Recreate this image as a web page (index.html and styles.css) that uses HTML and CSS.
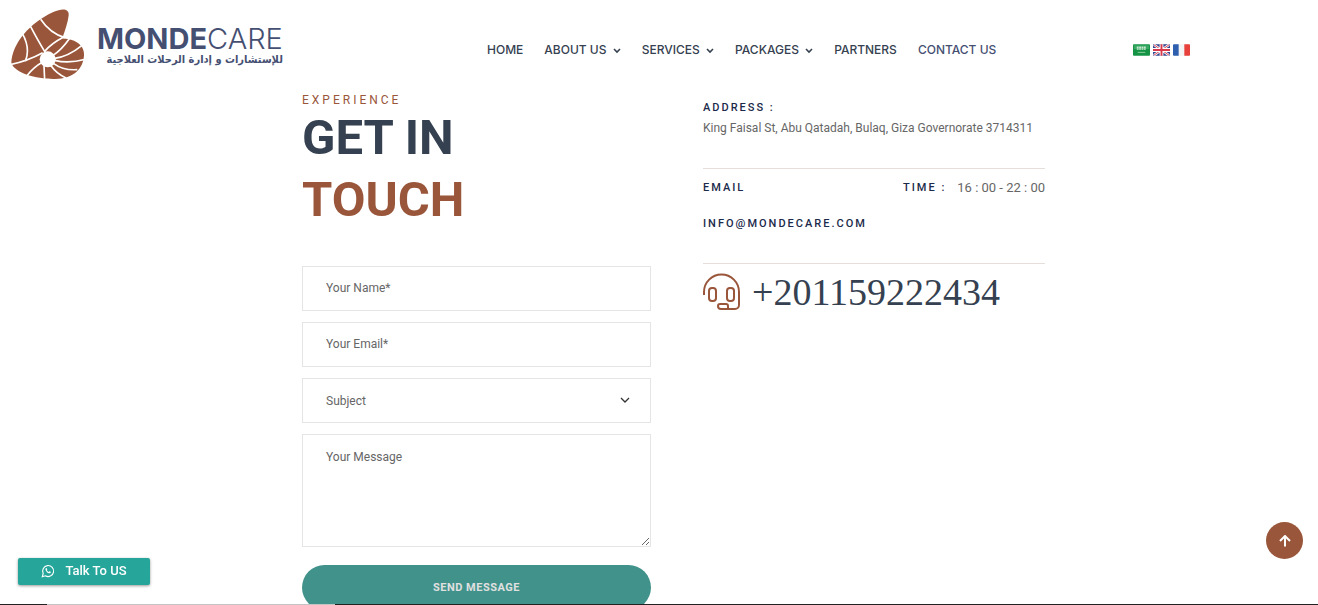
FILE: index.html
```html
<!DOCTYPE html>
<html lang="en">
<head>
    <meta charset="UTF-8">
    <meta name="viewport" content="width=device-width, initial-scale=1.0">
    <title>Mondecare - Contact Us</title>
    <link rel="stylesheet" href="styles.css">
</head>
<body>
    <header class="header">
        <a class="logo" href="#">
            <svg class="logo-mark" viewBox="30 24 225 216" aria-hidden="true">
                <path fill="#9a563a" d="M34 190C36 130 90 68 160 36C188 23 208 26 206 46C204 66 196 90 187 114C190 117 200 116 213 119C240 127 253 144 252 166C250 205 222 237 165 237C110 238 46 220 34 190Z"/>
                <g fill="none" stroke="#fff" stroke-width="5">
                    <path d="M67 100Q92 145 76 184M92 80Q110 115 136 158M122 58Q150 100 194 113M190 112Q155 130 134 154M30 194Q85 182 128 158M82 226Q100 202 128 186M134 240L132 198M198 234Q170 222 152 196M232 209Q190 212 160 190M256 178Q205 192 164 181M245 137Q205 170 164 175M209 115Q185 150 158 167"/>
                </g>
                <circle cx="143" cy="178" r="24" fill="#fff"/>
            </svg>
            <span class="logo-text">
                <span class="logo-name"><b>MONDE</b>CARE</span>
                <span class="logo-tagline" lang="ar" dir="rtl">للإستشارات و إدارة الرحلات العلاجية</span>
            </span>
        </a>

        <nav class="nav">
            <a href="#">HOME</a>
            <a href="#">ABOUT US <svg class="caret" viewBox="0 0 8 6"><path d="M1 1l3 3 3-3"/></svg></a>
            <a href="#">SERVICES <svg class="caret" viewBox="0 0 8 6"><path d="M1 1l3 3 3-3"/></svg></a>
            <a href="#">PACKAGES <svg class="caret" viewBox="0 0 8 6"><path d="M1 1l3 3 3-3"/></svg></a>
            <a href="#">PARTNERS</a>
            <a class="active" href="#">CONTACT US</a>
        </nav>

        <div class="flags">
            <a href="#" aria-label="Arabic">
                <svg viewBox="0 0 18 14">
                    <rect y="1" width="18" height="12" rx="1" fill="#169446"/>
                    <rect x="1" y="2" width="16" height="4" fill="#38a862"/>
                    <path d="M4 4h10M4 6h10" stroke="#c6e8cf" stroke-width="1.5" stroke-dasharray="2 .5"/>
                    <path d="M5 9.5h8" stroke="#8fd0a2"/>
                </svg>
            </a>
            <a href="#" aria-label="English">
                <svg viewBox="0 0 18 14">
                    <rect y="1" width="18" height="12" rx="1" fill="#33468f"/>
                    <path d="M1 1.500l16 11M17 1.500L1 12.500" stroke="#fff" stroke-width="2.500"/>
                    <path d="M1 1.500l16 11M17 1.500L1 12.500" stroke="#d8384a"/>
                    <path d="M9 1v12M0 7h18" stroke="#fff" stroke-width="4"/>
                    <path d="M9 1v12M0 7h18" stroke="#d8384a" stroke-width="2"/>
                </svg>
            </a>
            <a href="#" aria-label="French">
                <svg viewBox="0 0 18 14">
                    <rect y="1" width="18" height="12" rx="1" fill="#f4f4f4"/>
                    <path d="M1 1h5v12H1a1 1 0 0 1-1-1V2a1 1 0 0 1 1-1z" fill="#2d5fae"/>
                    <path d="M12 1h5a1 1 0 0 1 1 1v10a1 1 0 0 1-1 1h-5z" fill="#e8403a"/>
                </svg>
            </a>
        </div>
    </header>

    <main class="contact">
        <section class="form-side">
            <p class="eyebrow">EXPERIENCE</p>
            <h1>GET IN<br><span>TOUCH</span></h1>

            <form class="contact-form">
                <input type="text" id="name" placeholder="Your Name*" aria-label="Your Name">
                <input type="email" id="email" placeholder="Your Email*" aria-label="Your Email">
                <div class="select-wrap">
                    <select id="subject" aria-label="Subject">
                        <option>Subject</option>
                    </select>
                    <svg viewBox="0 0 10 6"><path d="M1 1l4 4 4-4"/></svg>
                </div>
                <textarea id="message" placeholder="Your Message" aria-label="Your Message"></textarea>
                <button class="send" type="submit">SEND MESSAGE</button>
            </form>
        </section>

        <section class="info-side">
            <div class="info-block">
                <h2>ADDRESS :</h2>
                <p>King Faisal St, Abu Qatadah, Bulaq, Giza Governorate 3714311</p>
            </div>
            <div class="info-block mail-block">
                <div class="info-row">
                    <h2>EMAIL</h2>
                    <div class="time">
                        <h2>TIME :</h2>
                        <p>16 : 00 - 22 : 00</p>
                    </div>
                </div>
                <a class="mail" href="mailto:info@mondecare.com">INFO@MONDECARE.COM</a>
            </div>
            <a class="phone" href="tel:+201159222434">
                <svg viewBox="0 0 37 37" aria-hidden="true">
                    <path d="M1 21v-3a17 17 0 0 1 35 0v13a4 4 0 0 1-4 4h-6"/>
                    <rect x="6" y="14" width="7" height="13" rx="3"/>
                    <rect x="24" y="14" width="7" height="13" rx="3"/>
                    <path d="M26 35h-8a3 3 0 0 1-3-3 2 2 0 0 1 2-2h6a2 2 0 0 1 2 2v3"/>
                </svg>
                <span>+201159222434</span>
            </a>
        </section>
    </main>

    <!-- Floating buttons -->
    <button class="talk" type="button">
        <svg viewBox="0 0 16 16" aria-hidden="true">
            <path d="M1.500 14.500l1-3.700A6.300 6.300 0 1 1 5 13.500z" fill="none" stroke="currentColor" stroke-width="1.300"/>
            <path d="M5.300 5c.5-.8 1.200-.6 1.400 0l.5 1.200-.6.800c.5 1 1.300 1.600 2.200 2l.8-.8 1.500.700c.4.3 0 1.300-.7 1.600-2 .8-6-2.500-5.100-5.500z" fill="currentColor"/>
        </svg>
        Talk To US
    </button>
    <a class="to-top" href="#" aria-label="Back to top">
        <svg viewBox="0 0 12 12"><path d="M6 11.500V1.500M1 6l5-5 5 5"/></svg>
    </a>
    <div class="bottom-line"></div>
</body>
</html>
```

FILE: styles.css
```css
/* General Styles */
* {
    margin: 0;
    padding: 0;
    box-sizing: border-box;
}

body {
    font-family: Roboto, "Liberation Sans", sans-serif;
    font-size: 12px;
    line-height: 24px;
    color: #666;
    background: #fff;
}

a {
    color: inherit;
    text-decoration: none;
}

/* Header */
.header {
    display: grid;
    grid-template-columns: 477fr 646fr 185fr;
    align-items: center;
    padding: 8px 0 8px 10px;
}

.logo {
    display: flex;
    align-items: center;
    gap: 12px;
    color: #454f72;
}

.logo-mark {
    width: 75px;
    height: 72px;
}

.logo-text {
    display: flex;
    flex-direction: column;
    padding-top: 8px;
    white-space: nowrap;
}

.logo-name {
    font-family: Inter, sans-serif;
    font-size: 29px;
    font-weight: 300;
    line-height: 24px;
}

.logo-name b {
    font-weight: 700;
}

.logo-tagline {
    font-family: "DejaVu Sans Condensed", "DejaVu Sans", sans-serif;
    font-size: 11px;
    font-weight: 700;
    line-height: 18px;
}

.nav {
    display: flex;
    gap: 21px;
    padding-top: 12px;
    font-family: Inter, sans-serif;
    font-weight: 500;
    color: #354150;
    white-space: nowrap;
}

.nav .active {
    color: #454f72;
}

.caret {
    width: 8px;
    height: 6px;
    margin-left: 3px;
    vertical-align: middle;
    fill: none;
    stroke: currentColor;
    stroke-width: 1.6;
}

.flags {
    display: flex;
    gap: 3px;
    padding-top: 12px;
}

.flags svg {
    display: block;
    width: 17px;
    height: 14px;
}

/* Contact */
.contact {
    display: grid;
    grid-template-columns: 302fr 349fr 52fr 342fr 273fr;
    padding-top: 6px;
}

.form-side {
    grid-column: 2;
}

.info-side {
    grid-column: 4;
}

.eyebrow {
    line-height: 12px;
    letter-spacing: 3px;
    color: #9a563a;
}

h1 {
    margin: 1px 0 35px;
    font-size: 49px;
    font-weight: 700;
    line-height: 62px;
    color: #354150;
}

h1 span {
    color: #9a563a;
}

.contact-form {
    display: flex;
    flex-direction: column;
    gap: 11px;
}

input,
select,
textarea {
    display: block;
    width: 100%;
    height: 45px;
    padding: 0 23px;
    border: 1px solid #e5e5e5;
    border-radius: 0;
    background: #fff;
    font: inherit;
    color: #666;
    outline: none;
}

input {
    padding-bottom: 2px;
}

textarea {
    height: 113px;
    padding: 10px 23px;
    resize: vertical;
}

::placeholder {
    color: #666;
    opacity: 1;
}

.select-wrap {
    position: relative;
}

.select-wrap select {
    appearance: none;
}

.select-wrap svg {
    position: absolute;
    top: 19px;
    right: 21px;
    width: 10px;
    height: 6px;
    fill: none;
    stroke: #333;
    stroke-width: 1.3;
    pointer-events: none;
}

.send {
    height: 45px;
    margin-top: 7px;
    border: none;
    border-radius: 23px;
    background: #40928a;
    font: inherit;
    font-size: 11px;
    font-weight: 700;
    letter-spacing: 0.5px;
    color: #e0e0e0;
    cursor: pointer;
}

h2,
.mail {
    font-size: 11px;
    font-weight: 500;
    line-height: 20px;
    letter-spacing: 2px;
    color: #1b2a4a;
}

.info-block {
    padding: 4px 0 30px;
    border-bottom: 1px solid #e6dedb;
}

.info-block p {
    line-height: 20px;
    white-space: nowrap;
}

.mail-block {
    padding: 9px 0 29px;
}

.info-row,
.time {
    display: flex;
    justify-content: space-between;
    align-items: center;
}

.time {
    gap: 11px;
}

.time p {
    font-size: 13px;
}

.mail {
    display: block;
    margin-top: 16px;
}

.phone {
    display: flex;
    align-items: center;
    gap: 12px;
    padding-top: 6px;
    font-family: "Liberation Serif", serif;
    font-size: 38px;
    line-height: 44px;
    color: #354150;
}

.phone svg {
    width: 37px;
    height: 37px;
    fill: none;
    stroke: #9a563a;
    stroke-width: 2;
    overflow: visible;
}

/* Floating buttons */
.talk {
    position: fixed;
    left: 18px;
    bottom: 20px;
    display: flex;
    align-items: center;
    justify-content: center;
    gap: 10px;
    width: 132px;
    height: 27px;
    padding-bottom: 2px;
    border: none;
    border-radius: 2px;
    background: #26a69a;
    box-shadow: 0 1px 3px rgba(0, 0, 0, 0.4);
    font: inherit;
    font-size: 13px;
    font-weight: 500;
    color: #fff;
    cursor: pointer;
}

.talk svg {
    width: 14px;
    height: 14px;
}

.to-top {
    position: fixed;
    right: 15px;
    bottom: 46px;
    display: flex;
    align-items: center;
    justify-content: center;
    width: 37px;
    height: 37px;
    border-radius: 50%;
    background: #9a563a;
}

.to-top svg {
    width: 12px;
    height: 12px;
    fill: none;
    stroke: #fff;
    stroke-width: 2;
}

.bottom-line {
    position: fixed;
    left: 0;
    right: 0;
    bottom: 0;
    height: 1px;
    background: linear-gradient(to right, #222 47px, #c4c4c4 47px, #c4c4c4 335px, #222 335px);
}
```
